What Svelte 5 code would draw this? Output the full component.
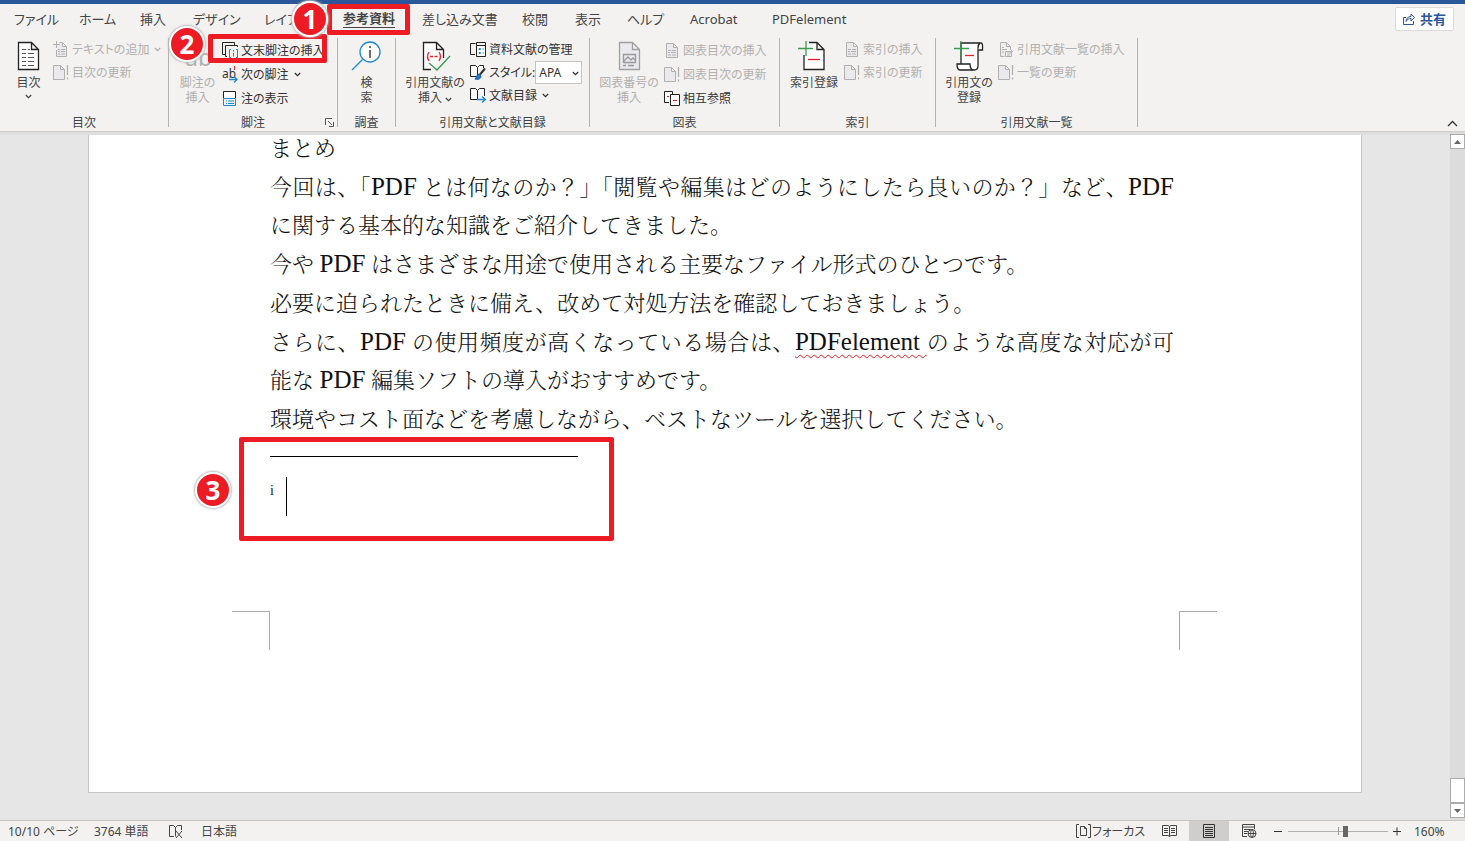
<script lang="ts">
  const tabs = ['ファイル', 'ホーム', '挿入', 'デザイン', 'レイアウト', '参考資料', '差し込み文書', '校閲', '表示', 'ヘルプ', 'Acrobat', 'PDFelement'];
  let active = $state('参考資料');
  let style = $state('APA');
  let zoom = $state(58);
</script>

{#snippet chevron()}
  <svg class="chev" width="7" height="5" viewBox="0 0 7 5"><path d="M.8 1 3.5 3.6 6.2 1" fill="none" stroke="currentColor" stroke-width="1.3" /></svg>
{/snippet}

{#snippet icon(name: string)}
  <svg class="ico" width="16" height="17" viewBox="0 0 16 17" fill="none" stroke="currentColor" stroke-width="1">
    {#if name === 'addtext'}
      <path d="M6.500 1.500h3l4 4v10h-10V9M9.500 1.500v4h4" fill="#e9e9ee" /><path d="M3.500 0v7M0 3.500h7M5 8.500h2m1 0h4M5 10.500h2m1 0h4M5 13h2m1 0h4" />
    {:else if name === 'update'}
      <path d="M.5 1.500h7l4 4v10H.5zM7.500 1.500v4h4" fill="#e9e9ee" /><path d="M14.500 1v10M14.500 13.500v2" stroke-width="1.300" />
    {:else if name === 'list'}
      <path d="M2.500 1.500h7l4 4v10h-11zM9.500 1.500v4h4" fill="#e9e9ee" /><path d="M4 8.500h3m1 0h4M4 10.500h2m1 0h5M4 13h3m1 0h4" />
    {:else if name === 'cite'}
      <path d="M2.500 1.500h6l4 4v3M8.500 1.500v4h4M2.500 1.500v14h4" fill="#e9e9ee" /><path d="M4 6.500h2M4 8.500h5M4 11h2M7.500 10.500h6v5h-6zM9 12h4M9 14h3M12 8l3 3" />
    {:else if name === 'endnote'}
      <path d="M3 12.500H.5V.5h12V3" stroke="#222" /><path d="M5 14.500H3.500v-11h12V5" stroke="#222" /><path d="M9 7.500H7.500v8H9M14 7.500h1.500v8H14M11.500 8v1.500M11.500 11v3.500" stroke="#1e88d0" />
    {:else if name === 'next'}
      <text x="0" y="12" font-size="12" fill="#333" stroke="none">ab</text><path d="M12.500 0v4" stroke="#e03a3a" /><path d="M7 13.500h8M12 10.500l3 3-3 3" stroke="#1e88d0" stroke-width="1.300" />
    {:else if name === 'show'}
      <path d="M1.500 8V1.500h12V8" stroke="#222" fill="#fff" /><path d="M1.500 8.500h12v7h-12zM4 11h1m1 0h6M4 13.500h1m1 0h6" stroke="#1e88d0" />
    {:else if name === 'manage'}
      <path d="M5 13.500H.5v-11h5M15.500 5V1.500h-9v3h9" stroke="#222" /><path d="M6.500 4.500v11h9v-11z" stroke="#222" fill="#fff" /><path d="M9 7.500h1.500v1H9zM9 11.500h1.500v1H9zM12.500 8H14M12.500 12H14" stroke="#1e88d0" />
    {:else if name === 'style'}
      <path d="M7.500 13.500 6 12.500H.5v-11h5l2 2v9M7.500 3.500l2-2h4V4" stroke="#222" fill="#fff" /><path d="M15 4.500 10 10.500" stroke="#333" stroke-width="2" /><path d="M9 10c-2 0-2 3-4 5 3 1 6 0 6-3z" fill="#1e78c8" stroke="#1e60a8" />
    {:else if name === 'biblio'}
      <path d="M7.500 12.500H.5v-11h5l2 2v9M7.500 3.500l2-2h5V9" stroke="#222" fill="#fff" /><path d="M7 12.500h8M12 9.500l3.500 3-3.500 3" stroke="#1e88d0" stroke-width="1.300" />
    {:else if name === 'xref'}
      <path d="M5 12.500H.5V1.500h8V4" stroke="#222" fill="#fff" /><path d="M6.500 4.500h9v11h-9z" stroke="#222" fill="#fff" /><path d="M3 6.500h2M9 10.500h4" stroke="#e8202a" />
    {/if}
  </svg>
{/snippet}

{#snippet bigIcon(name: string)}
  <svg class="ico" width="32" height="30" viewBox="0 0 32 30" fill="none" stroke="#222" stroke-width="1.300">
    {#if name === 'toc'}
      <path d="M5.500 1.500h13l7 7v20h-20zM18.500 1.500v7h7" fill="#fff" /><path d="M9 8.500h4m2 0h2M9 12.500h4m2 0h6M9 16.500h4m2 0h6M9 20.500h4m2 0h6M9 24.500h4m2 0h6" stroke="#555" stroke-width="1" />
    {:else if name === 'footnote'}
      <text x="3" y="25" font-size="23" fill="#b2b0ae" stroke="none">ab</text>
    {:else if name === 'search'}
      <circle cx="19" cy="11" r="10" stroke="#1e88d0" fill="#fff" /><path d="M11.500 18.500 1 29" stroke="#1e88d0" /><path d="M19 9v8M19 5v2" />
    {:else if name === 'citation'}
      <path d="M12 28.500H4.500v-27h13l7 7V17M17.500 1.500v7h7" fill="#fff" /><path d="M10 11c-2 3-2 6 0 9M20 11c2 3 2 6 0 9M11 15.500h3m1.500 0h3" stroke="#e8202a" /><path d="M10 22l8 7 13-14" stroke="#3a9a50" />
    {:else if name === 'caption'}
      <path d="M6.500 1.500h13l7 7v20h-20zM19.500 1.500v7h7" fill="#e9e9ee" stroke="#a0a0a0" /><path d="M10.500 13.500h12v8h-12zM11 20l4-4 3 3 2-2 3 3M10 24.500h3m2 0h6" stroke="#999" />
    {:else if name === 'index'}
      <path d="M11 1.500h8l7 7v20h-20V14M19 1.500v7h7" fill="#fff" /><path d="M10 18.500h12" stroke="#e8202a" /><path d="M8 0v15M0 7.500h15" stroke="#3a9a50" />
    {:else if name === 'authority'}
      <path d="M8 23V2h20c-3 0-3 3-3 7v16c0 3-2 4-4 4H7c-3 0-3-5-3-6h13c0 4 1 6 4 6" fill="#fff" /><path d="M28 2c2 0 1.500 4 1.500 7H25" fill="#fff" /><path d="M12 14.500h9" stroke="#e8202a" /><path d="M8 0v15M1 7.500h15" stroke="#3a9a50" />
    {/if}
  </svg>
{/snippet}

{#snippet small(name: string, text: string, off = false, drop = false)}
  <button class="small" class:off>{@render icon(name)}<span>{text}</span>{#if drop}{@render chevron()}{/if}</button>
{/snippet}

<div class="app" lang="ja">
  <header>
    <div class="top">
      <nav>
        {#each tabs as tab}
          <button class="tab" class:active={tab === active} onclick={() => (active = tab)}><span>{tab}</span></button>
        {/each}
      </nav>
      <button class="share">
        <svg width="12" height="12" viewBox="0 0 12 12" fill="none" stroke="currentColor"><path d="M3 4.500H.5v7h10V8" /><path d="M3 8.500c0-3 2-5 5-5V1l3.500 3.500L8 8V5.500c-2 0-4 1-5 3z" /></svg>
        共有
      </button>
    </div>

    <div class="ribbon">
      <section class="group toc">
        <div class="items">
          <button class="big">{@render bigIcon('toc')}<span>目次</span>{@render chevron()}</button>
          <div class="rows">
            {@render small('addtext', 'テキストの追加', true, true)}
            {@render small('update', '目次の更新', true)}
          </div>
        </div>
        <h2>目次</h2>
      </section>
      <section class="group notes">
        <div class="items">
          <button class="big off">{@render bigIcon('footnote')}<span>脚注の<br />挿入</span></button>
          <div class="rows loose">
            {@render small('endnote', '文末脚注の挿入')}
            {@render small('next', '次の脚注', false, true)}
            {@render small('show', '注の表示')}
          </div>
        </div>
        <h2>脚注</h2>
        <button class="launch" aria-label="脚注と文末脚注">
          <svg width="9" height="9" viewBox="0 0 9 9" fill="none" stroke="#555"><path d="M.5 7V.5H7M3 3l4 4M8.500 4v4.500H4" /></svg>
        </button>
      </section>
      <section class="group research">
        <div class="items"><button class="big">{@render bigIcon('search')}<span>検<br />索</span></button></div>
        <h2>調査</h2>
      </section>
      <section class="group cites">
        <div class="items">
          <button class="big">{@render bigIcon('citation')}<span>引用文献の<br />挿入 {@render chevron()}</span></button>
          <div class="rows">
            {@render small('manage', '資料文献の管理')}
            <div class="small">
              {@render icon('style')}
              <div class="field">
                <label for="style">スタイル:</label>
                <span class="pick">
                  <select id="style" bind:value={style}><option>APA</option><option>MLA</option></select>
                  {@render chevron()}
                </span>
              </div>
            </div>
            {@render small('biblio', '文献目録', false, true)}
          </div>
        </div>
        <h2>引用文献と文献目録</h2>
      </section>
      <section class="group figures">
        <div class="items">
          <button class="big off">{@render bigIcon('caption')}<span>図表番号の<br />挿入</span></button>
          <div class="rows loose">
            {@render small('list', '図表目次の挿入', true)}
            {@render small('update', '図表目次の更新', true)}
            {@render small('xref', '相互参照')}
          </div>
        </div>
        <h2>図表</h2>
      </section>
      <section class="group index">
        <div class="items">
          <button class="big">{@render bigIcon('index')}<span>索引登録</span></button>
          <div class="rows">
            {@render small('list', '索引の挿入', true)}
            {@render small('update', '索引の更新', true)}
          </div>
        </div>
        <h2>索引</h2>
      </section>
      <section class="group authorities">
        <div class="items">
          <button class="big">{@render bigIcon('authority')}<span>引用文の<br />登録</span></button>
          <div class="rows">
            {@render small('cite', '引用文献一覧の挿入', true)}
            {@render small('update', '一覧の更新', true)}
          </div>
        </div>
        <h2>引用文献一覧</h2>
      </section>
      <button class="collapse" aria-label="リボンを折りたたむ">
        <svg width="11" height="7" viewBox="0 0 11 7"><path d="M1 6l4.500-4.500L10 6" fill="none" stroke="#333" stroke-width="1.300" /></svg>
      </button>
    </div>
    <div class="frame f1"></div>
    <div class="frame f2"></div>
    <div class="badge b1">1</div>
    <div class="badge b2">2</div>
  </header>

  <main>
    <div class="canvas">
      <article>
        <div class="text">
          <p>まとめ</p>
          <p class="full">今回は、「<i>PDF</i> とは何なのか？」「閲覧や編集はどのようにしたら良いのか？」など、<i>PDF</i> に関する基本的な知識をご紹介してきました。</p>
          <p>今や <i>PDF</i> はさまざまな用途で使用される主要なファイル形式のひとつです。</p>
          <p>必要に迫られたときに備え、改めて対処方法を確認しておきましょう。</p>
          <p class="full">さらに、<i>PDF</i> の使用頻度が高くなっている場合は、<i class="typo">PDFelement{' '}</i>のような高度な対応が可能な <i>PDF</i> 編集ソフトの導入がおすすめです。</p>
          <p>環境やコスト面などを考慮しながら、ベストなツールを選択してください。</p>
        </div>
        <div class="endnote">
          <hr />
          <div class="note"><span>i</span><span class="caret"></span></div>
          <div class="frame f3"></div>
          <div class="badge b3">3</div>
        </div>
        <div class="corners"><span></span><span></span></div>
      </article>
    </div>
    <div class="scroll">
      <button aria-label="上へ"><svg width="7" height="4" viewBox="0 0 7 4"><path d="M0 4 3.500 0 7 4z" fill="#666" /></svg></button>
      <div class="track"></div>
      <div class="thumb"></div>
      <button aria-label="下へ"><svg width="7" height="4" viewBox="0 0 7 4"><path d="M0 0h7L3.500 4z" fill="#666" /></svg></button>
    </div>
  </main>

  <footer>
    <span class="pages">10/10 ページ</span>
    <span class="words">3764 単語</span>
    <button class="proof" aria-label="文章校正">
      <svg width="16" height="15" viewBox="0 0 16 15" fill="none" stroke="#444"><path d="M6 12.500H1.500v-11h4l2 2v9M7.500 3.500l2-2h4V6" /><path d="M8 7l6 7M14 7l-6 7" /></svg>
    </button>
    <span class="lang">日本語</span>
    <button class="focus">
      <svg width="15" height="14" viewBox="0 0 15 14" fill="none" stroke="#444"><path d="M3 .5H.5v13H3M12 .5h2.500v13H12M4.500 2.500h4l2 2v7h-6zM8.500 2.500v2h2" /></svg>フォーカス
    </button>
    <button class="view" aria-label="閲覧モード">
      <svg width="15" height="14" viewBox="0 0 15 14" fill="none" stroke="#444"><path d="M7.500 12.500 6 11.500H.5v-10H6l1.500 1L9 1.500h5.500v10H9zM7.500 2.500v10M2 4.500h4M2 6.500h4M2 8.500h4M9 4.500h4M9 6.500h4M9 8.500h4" /></svg>
    </button>
    <button class="view on" aria-label="印刷レイアウト">
      <svg width="12" height="14" viewBox="0 0 12 14" fill="none" stroke="#333"><path d="M.5.5h11v13H.5zM2 3.500h8M2 5.500h8M2 7.500h8M2 9.500h8M2 11.500h8" /></svg>
    </button>
    <button class="view" aria-label="Web レイアウト">
      <svg width="15" height="14" viewBox="0 0 15 14" fill="none" stroke="#444"><path d="M5 12.500H.5V.5h12V5M.5 3h12M2 5.500h7M2 7.500h4M2 9.500h3" /><circle cx="10" cy="9.500" r="4" /><path d="M6 9.500h8M10 5.500c-2 2-2 6 0 8 2-2 2-6 0-8" /></svg>
    </button>
    <button class="step" aria-label="縮小"><svg width="9" height="9" viewBox="0 0 9 9"><path d="M0 4.500h8" stroke="#333" /></svg></button>
    <input type="range" min="0" max="100" bind:value={zoom} aria-label="ズーム" />
    <button class="step" aria-label="拡大"><svg width="9" height="9" viewBox="0 0 9 9"><path d="M0 4.500h8M4 .5v8" stroke="#333" /></svg></button>
    <span class="percent">160%</span>
  </footer>
</div>

<style>
  :global(body) { background: #e6e6e6; }
  .app {
    height: 100vh; display: flex; flex-direction: column; overflow: hidden;
    font: 12px/15px "Noto Sans", "Noto Sans CJK JP", sans-serif;
    font-feature-settings: "palt"; color: #444;
  }
  button { font: inherit; font-feature-settings: inherit; color: inherit; background: none; border: 0; padding: 0; margin: 0; white-space: nowrap; }
  svg { display: block; flex: none; }
  header { position: relative; z-index: 1; flex: none; background: #f3f2f1; border-top: 4px solid #2b579a; border-bottom: 1px solid #cfcdcb; }
  .top { display: flex; justify-content: space-between; height: 31px; }
  nav { display: grid; grid-template-columns: 65px 61px 53px 71px 79px 79px 100px 53px 52px 63px 82px 90px; padding-left: 14px; height: 29px; }
  .tab { text-align: left; font-size: 13px; line-height: 18px; }
  .active span { display: inline-block; font-weight: bold; border-bottom: 1px solid #444; }
  .share { display: flex; align-items: center; gap: 5px; margin: 3px 11px 4px 0; padding: 0 7px; background: #fff; border: 1px solid #dcdad8; border-radius: 2px; color: #2b579a; font-size: 13px; font-weight: bold; }
  .ribbon { display: flex; height: 96px; padding-top: 3px; box-sizing: border-box; }
  .group { position: relative; flex: none; height: 89px; display: flex; flex-direction: column; border-right: 1px solid #b4b2b0; box-sizing: border-box; }
  .items { display: flex; flex: 1; }
  h2 { margin: 0; font-size: 12px; font-weight: normal; line-height: 8px; text-align: center; }
  .big { display: flex; flex-direction: column; align-items: center; justify-content: flex-start; gap: 4px; padding-top: 3px; flex: none; height: 68px; box-sizing: border-box; }
  .big span .chev { display: inline-block; }
  .small { display: flex; align-items: center; gap: 3px; height: 23px; color: #333; }
  .loose .small { height: 24px; }
  .off, .small.off { color: #b2b0ae; }
  .small .chev { margin-left: 2px; }
  .ico { overflow: visible; }
  .toc { width: 169px; } .toc .big { width: 53px; padding-left: 4px; }
  .notes { width: 169px; } .notes .big { width: 53px; padding-left: 4px; }
  .research { width: 58px; } .research .big { width: 57px; }
  .cites { width: 194px; } .cites .big { width: 74px; padding-left: 4px; }
  .figures { width: 190px; } .figures .big { width: 74px; padding-left: 4px; }
  .index { width: 156px; } .index .big { width: 64px; padding-left: 4px; }
  .authorities { width: 202px; } .authorities .big { width: 62px; padding-left: 4px; }
  .field { display: flex; align-items: center; }
  .pick { position: relative; }
  .pick select { display: block; width: 47px; height: 23px; padding: 0 3px; appearance: none; border: 1px solid #c6c4c2; border-radius: 0; background: #fff; color: #333; font: inherit; }
  .pick .chev { position: absolute; right: 3px; top: 10px; }
  .launch { position: absolute; right: 3px; bottom: 0; }
  .collapse { margin: auto 7px 0 auto; padding-bottom: 4px; }

  .frame { position: absolute; box-sizing: border-box; border: 5px solid #ed1c24; border-radius: 2px; pointer-events: none; }
  .badge { position: absolute; width: 32px; height: 32px; border: 2px solid #fff; border-radius: 50%; background: #ed1c24; box-shadow: 0 0 2px 1px #bbb; color: #fff; font: bold 26px/32px "Open Sans", sans-serif; text-align: center; }
  .f1 { left: 327px; top: 0; width: 83px; height: 31px; }
  .f2 { left: 208px; top: 30px; width: 119px; height: 29px; }
  .b1 { left: 292px; top: -3px; }
  .b2 { left: 169px; top: 22px; }

  main { flex: 1; min-height: 0; display: flex; background: #e6e6e6; }
  .canvas { flex: 1; min-width: 0; overflow: hidden; border-top: 3px solid #dedede; }
  article { max-width: 909px; margin: -5px auto 0; padding: 0 182px 142px 181px; border: 1px solid #c6c6c6; border-top: 0; background: #fff; }
  .text { display: flex; flex-direction: column; gap: 1px; color: #111; font: 300 22px/38px "Liberation Serif", "Noto Serif CJK JP", "Noto Sans CJK JP", serif; font-feature-settings: normal; }
  p { margin: 0; }
  .full { text-align: justify; padding-right: 5px; }
  i { font-style: normal; font-size: 25px; line-height: 24px; }
  .typo { text-decoration: underline wavy #ed1c24 1px; text-underline-offset: 4px; }
  .endnote { position: relative; padding-top: 17px; height: 155px; }
  hr { width: 308px; margin: 0; border: 0; border-top: 1px solid #000; }
  .note { display: flex; gap: 12px; margin-top: 20px; color: #222; font: 14px/28px "Liberation Serif", serif; }
  .caret { width: 1px; height: 39px; background: #000; }
  .f3 { left: -31px; top: -2px; width: 375px; height: 104px; }
  .b3 { left: -75px; top: 33px; }
  .corners { display: flex; justify-content: space-between; margin: 0 -38px; }
  .corners span { width: 37px; height: 38px; border: solid #ababab; border-width: 1px 1px 0 0; }
  .corners span:last-child { border-width: 1px 0 0 1px; }
  .scroll { flex: none; width: 15px; display: flex; flex-direction: column; padding: 2px 0; background: #dcdcdc; }
  .scroll button, .thumb { display: grid; place-items: center; flex: none; height: 15px; box-sizing: border-box; background: #fff; border: 1px solid #ababab; }
  .scroll .thumb { height: 25px; }
  .track { flex: 1; }

  footer { flex: none; display: flex; align-items: center; height: 20px; border-top: 1px solid #c8c6c4; background: #f3f2f1; padding: 0 8px; }
  .pages { width: 86px; } .words { width: 74px; }
  footer span { white-space: nowrap; }
  .proof { width: 33px; }
  .focus { display: flex; align-items: center; gap: 1px; margin-left: auto; width: 73px; }
  .view { display: grid; place-items: center; width: 40px; height: 20px; }
  .on { background: #d0cecc; }
  .step { width: 9px; margin: 0 5px; }
  input { appearance: none; width: 100px; height: 16px; margin: 0; background: linear-gradient(#999, #999) 50px 50% / 1px 8px no-repeat, linear-gradient(#b0b0b0, #b0b0b0) 0 50% / 100% 1px no-repeat; }
  input::-webkit-slider-thumb { appearance: none; width: 5px; height: 11px; background: #666; }
  .percent { width: 50px; padding-left: 7px; box-sizing: border-box; }
</style>
